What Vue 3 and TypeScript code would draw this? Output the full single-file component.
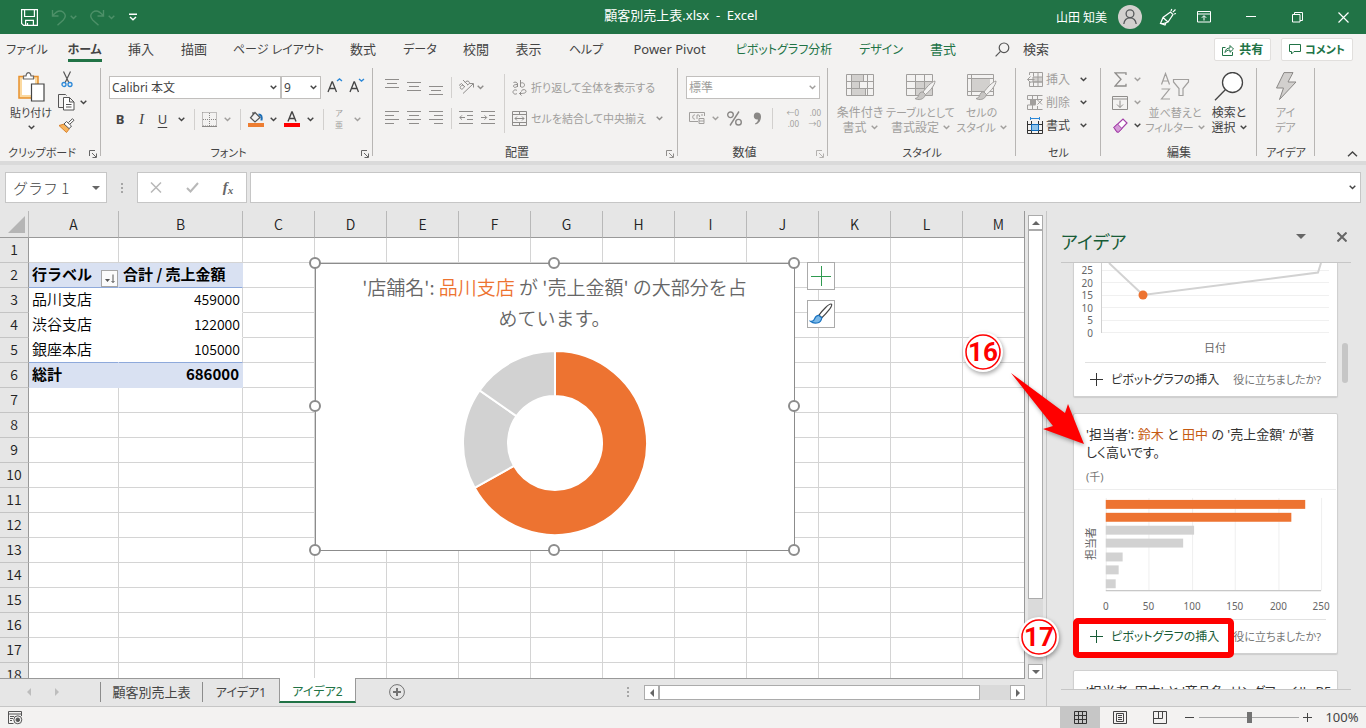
<script setup lang="ts">
import { computed, h, ref } from 'vue'

const Chev = () =>
  h('svg', { class: 'chev', width: 7, height: 5, viewBox: '0 0 7 5', fill: 'none', stroke: 'currentColor', 'stroke-width': 1.4 }, [
    h('path', { d: 'M.7.8l2.8 2.8L6.3.8' }),
  ])

const Launcher = () =>
  h('svg', { class: 'launcher', width: 8, height: 8, viewBox: '0 0 8 8', fill: 'none', stroke: 'currentColor' }, [
    h('path', { d: 'M.5 6V.5H6M3 3l4 4M7.5 3.500V7.500H3.500' }),
  ])

interface RibbonTab { label: string; kind?: string }
const tabs: RibbonTab[] = [
  { label: 'ファイル', kind: 'kana' },
  { label: 'ホーム', kind: 'active' },
  { label: '挿入' },
  { label: '描画' },
  { label: 'ページ レイアウト', kind: 'kana' },
  { label: '数式' },
  { label: 'データ', kind: 'kana' },
  { label: '校閲' },
  { label: '表示' },
  { label: 'ヘルプ', kind: 'kana' },
  { label: 'Power Pivot' },
  { label: 'ピボットグラフ分析', kind: 'context kana' },
  { label: 'デザイン', kind: 'context kana' },
  { label: '書式', kind: 'context' },
]

const restColumns = ['C', 'D', 'E', 'F', 'G', 'H', 'I', 'J', 'K', 'L', 'M']

interface PivotRow { a: string; b: string; kind: string }
const pivot: Record<number, PivotRow> = {
  2: { a: '行ラベル', b: '合計 / 売上金額', kind: 'p-head' },
  3: { a: '品川支店', b: '459000', kind: 'p-body' },
  4: { a: '渋谷支店', b: '122000', kind: 'p-body' },
  5: { a: '銀座本店', b: '105000', kind: 'p-last' },
  6: { a: '総計', b: '686000', kind: 'p-total' },
}

const donut = computed(() => {
  const values = [459, 122, 105]
  const total = values.reduce((s, v) => s + v, 0)
  const c = 93
  const R = 92
  const r = 47
  let angle = 0
  return values.map((v, i) => {
    const a0 = angle
    angle += (v / total) * Math.PI * 2
    const a1 = angle
    const pt = (rad: number, a: number) => `${(c + rad * Math.sin(a)).toFixed(2)} ${(c - rad * Math.cos(a)).toFixed(2)}`
    const large = a1 - a0 > Math.PI ? 1 : 0
    return {
      fill: i === 0 ? '#ed7331' : '#d2d2d2',
      d: `M${pt(R, a0)}A${R} ${R} 0 ${large} 1 ${pt(R, a1)}L${pt(r, a1)}A${r} ${r} 0 ${large} 0 ${pt(r, a0)}Z`,
    }
  })
})

const handles = ['tl', 'tc', 'tr', 'ml', 'mr', 'bl', 'bc', 'br']

const bars = [232, 215, 102, 90, 20, 15, 12]
const barTops = [10, 23, 36, 49, 63, 76, 90]
const barTicks = [0, 50, 100, 150, 200, 250]
const barX = (v: number) => 31 + Math.round((v * 217) / 250)
const lineTicks = [25, 20, 15, 10, 5, 0]

const fontName = ref('Calibri 本文')
const fontSize = ref('9')
const numberFormat = ref('標準')
const zoom = ref(50)
</script>

<template>
  <div class="app">
    <header class="titlebar">
      <div class="quick">
        <button aria-label="上書き保存">
          <svg width="17" height="17" viewBox="0 0 17 17" fill="none" stroke="#fff" stroke-width="1.2"><path d="M.6.6h15.8v15.8H2.600L.6 14.400zM3.600.6v6.900h9.800V.6M4.600 16.400v-5h7.800v5M6.500 16v-2" /></svg>
        </button>
        <button class="faded end" aria-label="元に戻す">
          <svg width="17" height="17" viewBox="0 0 17 17" fill="none" stroke="currentColor" stroke-width="1.4"><path d="M1.500 1v6h6M1.700 6.800C5 2.500 9 .800 12.300 3.200c3 2.300 2.200 5.600 0 7.800L6.500 16.300" /></svg>
        </button>
        <button class="faded" aria-label="元に戻す一覧"><Chev /></button>
        <button class="faded end" aria-label="やり直し">
          <svg width="17" height="17" viewBox="0 0 17 17" fill="none" stroke="currentColor" stroke-width="1.4"><path d="M15.500 1v6h-6M15.300 6.800C12 2.500 8 .800 4.700 3.200c-3 2.300-2.200 5.600 0 7.800l5.800 5.300" /></svg>
        </button>
        <button class="faded" aria-label="やり直し一覧"><Chev /></button>
        <button aria-label="クイック アクセス ツール バーのカスタマイズ">
          <svg width="8" height="8" viewBox="0 0 8 8" fill="none" stroke="#fff" stroke-width="1.400"><path d="M0 1.200h8M1 4l3 2.800L7 4" /></svg>
        </button>
      </div>
      <h1>顧客別売上表.xlsx&nbsp; -&nbsp; Excel</h1>
      <div class="window-tools">
        <span class="user">山田 知美</span>
        <svg class="avatar" width="24" height="24" viewBox="0 0 24 24"><circle cx="12" cy="12" r="12" fill="#d2d0ce" /><g fill="none" stroke="#55585a" stroke-width="1.300"><circle cx="12" cy="8.800" r="3.900" /><path d="M5.800 19c.5-4 3-6.200 6.200-6.200s5.700 2.200 6.200 6.200" /></g></svg>
        <button aria-label="近日公開の機能">
          <svg width="18" height="18" viewBox="0 0 18 18" fill="none" stroke="#fff" stroke-width="1.200"><path d="M1.500 15.500L4 9.500 11.500 4l2.500 2.500-5 7.500-4.500 1.500zM4 9.500l5 4.500M1.500 15.500l4.500 1.500 1-2M12 3l.8-2M13.800 4.200l2.700-2.700M15 6l2-.5" /></svg>
        </button>
        <button aria-label="リボンの表示オプション">
          <svg width="14" height="12" viewBox="0 0 14 12" fill="none" stroke="#fff"><path d="M.5.5h13v10.500H.5zM.5 3h13M7 9.500V5M4.800 6.800L7 4.600l2.200 2.200" /></svg>
        </button>
        <button aria-label="最小化"><svg width="10" height="2" viewBox="0 0 10 2"><path d="M0 .5h10" stroke="#fff" /></svg></button>
        <button aria-label="元のサイズに戻す">
          <svg width="11" height="11" viewBox="0 0 11 11" fill="none" stroke="#fff"><path d="M.5 2.500h7.500v7.500H.5zM2.500 2.500v-2h8v8H8" /></svg>
        </button>
        <button aria-label="閉じる"><svg width="11" height="11" viewBox="0 0 11 11" stroke="#fff" stroke-width="1.200"><path d="M.5.5l10 10M10.500.5l-10 10" /></svg></button>
      </div>
    </header>

    <nav class="tabrow">
      <div class="tabs">
        <button v-for="t in tabs" :key="t.label" class="tab" :class="t.kind">{{ t.label }}</button>
      </div>
      <button class="search">
        <svg width="15" height="15" viewBox="0 0 15 15" fill="none" stroke="#555" stroke-width="1.200"><circle cx="9" cy="5.800" r="4.800" /><path d="M5.500 9.300L.6 14.300" /></svg>
        <span>検索</span>
      </button>
      <div class="tab-actions">
        <button class="pill">
          <svg width="12" height="12" viewBox="0 0 12 12" fill="none" stroke="currentColor"><path d="M3.500 3.500h-3v8h10V8M3 8.500c.3-3 2-4.500 5-4.500V1.500L11.500 5 8 8.300V6C5.500 6 4 7 3 8.500z" /></svg>
          共有
        </button>
        <button class="pill narrow">
          <svg width="12" height="11" viewBox="0 0 12 11" fill="none" stroke="currentColor"><path d="M.5.5h11v7H5L2.500 10V7.500h-2z" /></svg>
          コメント
        </button>
      </div>
    </nav>

    <div class="ribbon">
      <section class="group g-clip">
        <div class="body">
          <button class="big">
            <svg width="30" height="32" viewBox="0 0 30 32" fill="none"><path d="M3 4.500h19V26H3z" fill="#fbd9a0" stroke="#e8912d" stroke-width="1.500" /><path d="M6 7h13v16H6z" fill="#fff" /><path d="M7.500 7V4H10C10.300 1.500 11 .6 12.500.6S14.700 1.500 15 4h2.500v3z" fill="#fff" stroke="#6b6b6b" stroke-width="1.200" /><path d="M15.500 12h12.500v17H15.500z" fill="#fff" stroke="#444" stroke-width="1.200" /></svg>
            <span class="kana">貼り付け</span>
            <span><Chev /></span>
          </button>
          <div class="stack">
            <button aria-label="切り取り"><svg width="12" height="17" viewBox="0 0 12 17" fill="none"><path d="M2.500.5l5.300 11M9.500.5L4.200 11.500" stroke="#555" stroke-width="1.200" /><circle cx="3" cy="13.500" r="2" stroke="#2b88d8" stroke-width="1.300" /><circle cx="9" cy="13.500" r="2" stroke="#2b88d8" stroke-width="1.300" /></svg></button>
            <div class="pair">
              <button aria-label="コピー"><svg width="17" height="17" viewBox="0 0 17 17" fill="#fff" stroke="#555"><path d="M5.500 13.500h-5V.5h7l1 1" fill="none" /><path d="M5.500 3.500h6l4.500 4.500v8H5.500zM11.500 3.500V8H16M8 10.500h5.500M8 13h5.500" /></svg></button>
              <button aria-label="コピーの一覧"><Chev /></button>
            </div>
            <button aria-label="書式のコピー"><svg width="17" height="15" viewBox="0 0 17 15"><path d="M1 7.500l5.500-1.500 5 4.500L8.500 14.500z" fill="#f8b45c" stroke="#d9822b" /><path d="M6 6l2.500-2.500 5 4.500-2.300 2.700zM10.500 4.500l4-3.800 1.500 1.600-4 3.700" fill="#fff" stroke="#555" /></svg></button>
          </div>
        </div>
        <footer><span class="kana">クリップボード</span><button aria-label="クリップボードの詳細"><Launcher /></button></footer>
      </section>

      <section class="group g-font">
        <div class="body rows">
          <div class="row">
            <label class="combo c-font"><select v-model="fontName" aria-label="フォント"><option>Calibri 本文</option></select><Chev /></label>
            <label class="combo c-size"><select v-model="fontSize" aria-label="フォント サイズ"><option>9</option></select><Chev /></label>
            <button class="grow-font" aria-label="フォント サイズの拡大"><svg width="16" height="16" viewBox="0 0 16 16" fill="none"><path d="M1 14L5 4h.5l4 10M2.400 10.500h5.800" stroke="#444" stroke-width="1.300" /><path d="M10 3l2.500-2L15 3" stroke="#2b88d8" stroke-width="1.400" /></svg></button>
            <button class="grow-font" aria-label="フォント サイズの縮小"><svg width="16" height="16" viewBox="0 0 16 16" fill="none"><path d="M1 14L5 4h.5l4 10M2.400 10.500h5.800" stroke="#444" stroke-width="1.300" /><path d="M10 1l2.500 2L15 1" stroke="#2b88d8" stroke-width="1.400" /></svg></button>
          </div>
          <div class="row fmt">
            <button class="b">B</button><button class="i">I</button><button class="u">U</button><button aria-label="下線の種類"><Chev /></button>
            <i class="bar"></i>
            <button class="off" aria-label="罫線"><svg width="15" height="15" viewBox="0 0 15 15" fill="none" stroke="#8a8886"><path d="M.5.5h14v13.500H.5zM7.500 1v13M1 7.500h13" stroke-dasharray="1 1" /><path d="M0 14.500h15" /></svg></button><button class="off" aria-label="罫線の種類"><Chev /></button>
            <i class="bar"></i>
            <button aria-label="塗りつぶしの色"><svg width="16" height="16" viewBox="0 0 16 16" fill="none"><path d="M7 1.500L12 6.500 7 11 2.500 6.800zM5 3.500V1" stroke="#555" stroke-width="1.200" /><path d="M10.500 3.500c3 0 3.500 2 3 6" stroke="#1f6fb5" stroke-width="2" /><path d="M0 12h16v4H0z" fill="#ed7d31" /></svg></button><button aria-label="塗りつぶしの色の一覧"><Chev /></button>
            <button aria-label="フォントの色"><svg width="16" height="16" viewBox="0 0 16 16" fill="none"><path d="M4 10.500L7.800 1h.4L12 10.500M5.300 7.500h5.400" stroke="#444" stroke-width="1.400" /><path d="M0 12h16v4H0z" fill="#f00" /></svg></button><button aria-label="フォントの色の一覧"><Chev /></button>
            <i class="bar"></i>
            <button class="off ruby" aria-label="ふりがな"><span>ア</span><span>亜</span></button><button class="off" aria-label="ふりがなの設定"><Chev /></button>
          </div>
        </div>
        <footer><span class="kana">フォント</span><button aria-label="フォントの詳細"><Launcher /></button></footer>
      </section>

      <section class="group g-align off">
        <div class="body">
          <div class="rows aligns">
            <div class="row al">
              <button aria-label="上揃え"><svg width="14" height="18" viewBox="0 0 14 18" stroke="currentColor"><path d="M0 1.500h14M2 5.500h10M0 9.500h14" /></svg></button>
              <button aria-label="上下中央揃え"><svg width="14" height="18" viewBox="0 0 14 18" stroke="currentColor"><path d="M0 4.500h14M2 8.500h10M0 12.500h14" /></svg></button>
              <button aria-label="下揃え"><svg width="14" height="18" viewBox="0 0 14 18" stroke="currentColor"><path d="M0 8.500h14M2 12.500h10M0 16.500h14" /></svg></button>
              <i class="bar"></i>
              <button aria-label="方向"><svg width="16" height="16" viewBox="0 0 16 16" fill="none" stroke="currentColor"><path d="M5 14.500L15 5M11.500 4.500h4V8.500M1 6.500L3.500 4.500 7 8M5 6C3 6.500 1.500 8 2.500 9.500S6 9.500 6 7.500M5 1l5 5M7 3.500c1-1.500 3-2 4-.8s.3 2.500-1.500 3.300" /></svg></button>
              <button class="start" aria-label="方向の一覧"><Chev /></button>
            </div>
            <div class="row al">
              <button aria-label="左揃え"><svg width="14" height="14" viewBox="0 0 14 14" stroke="currentColor"><path d="M0 .5h14M0 4.500h9M0 8.500h14M0 12.500h9" /></svg></button>
              <button aria-label="中央揃え"><svg width="14" height="14" viewBox="0 0 14 14" stroke="currentColor"><path d="M0 .5h14M2 4.500h10M0 8.500h14M2 12.500h10" /></svg></button>
              <button aria-label="右揃え"><svg width="14" height="14" viewBox="0 0 14 14" stroke="currentColor"><path d="M0 .5h14M5 4.500h9M0 8.500h14M5 12.500h9" /></svg></button>
              <i class="bar"></i>
              <button aria-label="インデントを減らす"><svg width="14" height="14" viewBox="0 0 14 14" fill="none" stroke="currentColor"><path d="M0 .5h14M8 4.500h6M8 8.500h6M0 12.500h14M6 6.500H.8M3 4.300L.8 6.500 3 8.700" /></svg></button>
              <button aria-label="インデントを増やす"><svg width="14" height="14" viewBox="0 0 14 14" fill="none" stroke="currentColor"><path d="M0 .5h14M8 4.500h6M8 8.500h6M0 12.500h14M0 6.500h5.500M3.500 4.300l2.200 2.200-2.200 2.200" /></svg></button>
            </div>
          </div>
          <div class="rows wraps">
            <button class="row wrap-btn"><svg width="15" height="17" viewBox="0 0 15 17" fill="none" stroke="currentColor"><path d="M1.500 3.500c2-1 4 0 4 1.500v3M5.500 5.500c-2.500 0-4.500.5-4 2s3.500.8 4-.5M8.500 1v7M8.500 4.500c1.500-1.500 4-.5 4 1.500s-2.500 3-4 1.500M5 11.500c-2-1.500-4 0-4 1.500s2 3 4 1.500M9.500 11.500c2-1.500 4.500-1 4.500.8s-2 2.200-6.500 2.200M9.500 12.500l-2 2 2 2" /></svg><span>折り返して全体を表示する</span></button>
            <button class="row wrap-btn"><svg width="15" height="15" viewBox="0 0 15 15" fill="none" stroke="currentColor"><path d="M.5.5h14v14H.5zM.5 3.500h14M.5 11.500h14M7.500.5v3M7.500 11.500v3M3 7.500h9M5 5.500l-2 2 2 2M10 5.500l2 2-2 2" /></svg><span>セルを結合して中央揃え</span><Chev /></button>
          </div>
        </div>
        <footer><span>配置</span><button aria-label="配置の詳細"><Launcher /></button></footer>
      </section>

      <section class="group g-num off">
        <div class="body rows">
          <div class="row"><label class="combo c-num"><select v-model="numberFormat" aria-label="表示形式"><option>標準</option></select><Chev /></label></div>
          <div class="row nums">
            <button aria-label="通貨表示形式"><svg width="17" height="14" viewBox="0 0 17 14" fill="none" stroke="currentColor"><path d="M9 10.500H.5v-9h15V5M6 4c-3-1-3 5 0 4M8 8V4c2-.5 3 .5 2.500 2M10 7.500h5v5h-5zM10 10h5M14 4h-2" /></svg></button>
            <button aria-label="通貨の一覧"><Chev /></button>
            <button aria-label="パーセント"><svg width="15" height="15" viewBox="0 0 15 15" fill="none" stroke="#8a8886" stroke-width="1.400"><circle cx="3.500" cy="3.800" r="2.800" /><circle cx="11.500" cy="11.200" r="2.800" /><path d="M12 .5L3 14.500" /></svg></button>
            <button aria-label="桁区切り"><svg width="9" height="13" viewBox="0 0 9 13"><path d="M4 .5C6.500.5 8 2 8 4.500 8 8.500 6 11.500 2.500 12.500l-.5-1c2-1 3-2.500 3-4C2.500 8 .8 6.500.8 4.300.8 2 2 .5 4 .5z" fill="#8a8886" /></svg></button>
            <i class="bar"></i>
            <button class="dec" aria-label="小数点以下の表示桁数を増やす"><span>←0</span><span>.00</span></button>
            <button class="dec" aria-label="小数点以下の表示桁数を減らす"><span>.00</span><span>→0</span></button>
          </div>
        </div>
        <footer><span>数値</span><button aria-label="表示形式の詳細"><Launcher /></button></footer>
      </section>

      <section class="group g-style off">
        <div class="body">
          <button class="big">
            <svg width="30" height="32" viewBox="0 0 30 32" fill="none" stroke="currentColor"><path d="M7 3h12v7H7zM7 10h8v7H7zM7 17h14v7H7z" fill="#d2d0ce" stroke="none" /><path d="M1.500 2.500h27v21h-27zM1.500 9.500h27M1.500 16.500h27M6.500 2.500v21M22.500 2.500v21M18.500 2.500v7M14.500 9.500v7M20.500 16.500v7" /></svg>
            <span>条件付き</span><span>書式 <Chev /></span>
          </button>
          <button class="big">
            <svg width="32" height="32" viewBox="0 0 32 32" fill="none" stroke="currentColor"><path d="M10 9h17v14H10z" fill="#d2d0ce" stroke="none" /><path d="M1.500 2.500h26v21h-26zM1.500 9.500h26M1.500 16.500h26M10.500 2.500v21M19.500 2.500v21" /><path d="M30 9c-4 1-9 7-12 11l2.500 2.500C25 19 30 13 30 9z" fill="#f3f2f1" /><path d="M18 20c-3-.5-4 2-4.500 4-.7 1.500-2 2.300-3.500 2.500 3 2 9 1.500 10.500-4z" fill="#c8c6c4" /></svg>
            <span class="kana">テーブルとして</span><span>書式設定 <Chev /></span>
          </button>
          <button class="big">
            <svg width="32" height="32" viewBox="0 0 32 32" fill="none" stroke="currentColor"><path d="M6 6h18v14H6z" fill="#d2d0ce" stroke="none" /><path d="M1.500 2.500h26v21h-26zM5.500 2.500v21M1.500 6.500h26M1.500 19.500h26" /><path d="M30 9c-4 1-9 7-12 11l2.500 2.500C25 19 30 13 30 9z" fill="#f3f2f1" /><path d="M18 20c-3-.5-4 2-4.500 4-.7 1.500-2 2.300-3.500 2.500 3 2 9 1.500 10.500-4z" fill="#c8c6c4" /></svg>
            <span class="kana">セルの</span><span class="kana">スタイル <Chev /></span>
          </button>
        </div>
        <footer><span class="kana">スタイル</span></footer>
      </section>

      <section class="group g-cell">
        <div class="body stack">
          <button class="cell-btn"><svg class="off" width="16" height="15" viewBox="0 0 16 15" fill="none" stroke="currentColor"><path d="M6 5h9.500v5H6z" fill="#d2d0ce" /><path d="M2.500 3V.5h13v14h-13V12M2.500 12.500V10h13M6.500.5v4M11 .5v14M6.500 10v4M.5 7.500h7M3.500 4.500l-3 3 3 3" /></svg><span class="off">挿入</span><Chev /></button>
          <button class="cell-btn"><svg class="off" width="16" height="15" viewBox="0 0 16 15" fill="none" stroke="currentColor"><path d="M3.500 5h5v4.500h-5z" fill="#a19f9d" /><path d="M.5.5h15M.5.5v4h15M.5 14.500h15M.5 10v4.500M.5 10h8M5.500.5v4M10.500.5v4M5.500 10v4.500M10.500 11v3.500M10.500 5l4.500 4.500M15 5l-4.500 4.500" /></svg><span class="off">削除</span><Chev /></button>
          <button class="cell-btn"><svg width="16" height="17" viewBox="0 0 16 17" fill="none"><path d="M.5 4v12.500h15V4M.5 7.500h15M.5 13.500h15M4.500 4v12.500M11.500 4v12.500" stroke="#333" /><path d="M4.500 7.500h7v6h-7z" fill="#8ec3eb" stroke="#0f6cbd" /><path d="M3.500 1.500h9M3.500 0v3M12.500 0v3" stroke="#2b88d8" /></svg><span>書式</span><Chev /></button>
        </div>
        <footer><span class="kana">セル</span></footer>
      </section>

      <section class="group g-edit">
        <div class="body">
          <div class="stack">
            <button class="icon-chev off" aria-label="合計"><svg width="13" height="15" viewBox="0 0 13 15" fill="none" stroke="#8f8d8b" stroke-width="1.300"><path d="M12 3V.8H1L7 7.300 1 14h11v-2.200" /></svg><Chev /></button>
            <button class="icon-chev off" aria-label="フィル"><svg width="16" height="14" viewBox="0 0 16 14" fill="none" stroke="#8f8d8b"><path d="M.5.500h15v13H.5zM.5 3h15M8 4.500v7M5 8.500l3 3 3-3" /></svg><Chev /></button>
            <button class="icon-chev" aria-label="クリア"><svg width="15" height="15" viewBox="0 0 15 15"><path d="M1 9.500L10 1l4 4-8.500 9H4z" fill="#fff" stroke="#a33fa8" stroke-width="1.200" /><path d="M1 9.500l3.500-3.500 4.500 4.700L5.500 14H4z" fill="#d59ad8" stroke="#a33fa8" /></svg><Chev /></button>
          </div>
          <button class="big off">
            <svg width="30" height="32" viewBox="0 0 30 32" fill="none" stroke="currentColor" stroke-width="1.200"><path d="M1.500 12.500l4-11 4 11M3 9h5M1.500 17h8l-8 10h8.500M13.500 7.500h15v2.500l-5.500 6.500v7h-4v-7L13.500 10z" /></svg>
            <span class="kana">並べ替えと</span><span class="kana">フィルター <Chev /></span>
          </button>
          <button class="big">
            <svg width="30" height="32" viewBox="0 0 30 32" fill="#fff" stroke="#444" stroke-width="1.300"><circle cx="18.500" cy="10.500" r="10" /><path d="M11.300 17.700L1 28.200" /></svg>
            <span>検索と</span><span>選択 <Chev /></span>
          </button>
        </div>
        <footer><span>編集</span></footer>
      </section>

      <section class="group g-idea">
        <div class="body">
          <button class="big off">
            <svg width="22" height="32" viewBox="0 0 22 32"><path d="M9 .6h9L13 10h8L4.500 27.500l4-11.500H1.500z" fill="#d2d0ce" stroke="#8a8886" /></svg>
            <span class="kana">アイ</span><span class="kana">デア</span>
          </button>
        </div>
        <footer><span class="kana">アイデア</span></footer>
      </section>
      <button class="collapse" aria-label="リボンを折りたたむ"><svg width="11" height="6" viewBox="0 0 11 6" fill="none" stroke="#444" stroke-width="1.400"><path d="M1 5.200l4.500-4.200L10 5.200" /></svg></button>
    </div>

    <div class="formula">
      <div class="namebox"><input value="グラフ 1" aria-label="名前ボックス" /><i class="tri down"></i></div>
      <span class="dots"></span>
      <div class="fx">
        <button aria-label="キャンセル"><svg width="12" height="11" viewBox="0 0 12 11" stroke="#b8b8b8" stroke-width="1.500"><path d="M1 .5l10 10M11 .5L1 10.500" /></svg></button>
        <button aria-label="入力"><svg width="13" height="11" viewBox="0 0 13 11" fill="none" stroke="#b8b8b8" stroke-width="2"><path d="M1 6l3.500 3.500L12 1" /></svg></button>
        <button class="fxb">f<small>x</small></button>
      </div>
      <div class="fbar"><input aria-label="数式バー" /><Chev /></div>
    </div>

    <main class="main">
      <div class="book">
        <div class="sheet-wrap">
          <div class="sheet">
            <table>
              <colgroup><col class="w-n" /><col class="w-a" /><col class="w-b" /><col v-for="c in restColumns" :key="c" class="w-c" /></colgroup>
              <thead>
                <tr>
                  <th class="corner"><svg width="17" height="17" viewBox="0 0 17 17"><path d="M17 0v17H0z" fill="#b5b5b5" /></svg></th>
                  <th>A</th><th>B</th>
                  <th v-for="c in restColumns" :key="c">{{ c }}</th>
                </tr>
              </thead>
              <tbody>
                <tr v-for="n in 18" :key="n" :class="pivot[n]?.kind">
                  <th>{{ n }}</th>
                  <td class="pa">
                    <div v-if="n === 2" class="filter-cell">{{ pivot[n].a }}<button aria-label="並べ替え"><svg width="12" height="12" viewBox="0 0 12 12"><path d="M1 6h5L3.500 9z" fill="#555" /><path d="M9 1.500v8M7.500 8L9 9.500 10.500 8" fill="none" stroke="#555" /></svg></button></div>
                    <template v-else-if="pivot[n]">{{ pivot[n].a }}</template>
                  </td>
                  <td class="pb">{{ pivot[n]?.b }}</td>
                  <td v-for="c in restColumns" :key="c"></td>
                </tr>
              </tbody>
            </table>

            <div class="chart">
              <p>'店舗名': <b>品川支店</b> が '売上金額' の大部分を占<br />めています。</p>
              <svg width="186" height="186" viewBox="0 0 186 186"><path v-for="s in donut" :key="s.d" :d="s.d" :fill="s.fill" stroke="#fff" stroke-width="2" /></svg>
              <i v-for="k in handles" :key="k" class="handle" :class="k"></i>
              <div class="chart-tools">
                <button aria-label="グラフ要素"><svg width="20" height="20" viewBox="0 0 20 20"><path d="M10.500 0v20M0 10.500h20" stroke="#2f9a50" /></svg></button>
                <button aria-label="グラフ スタイル"><svg width="24" height="22" viewBox="0 0 24 22"><path d="M22.500 1.200c-2-1.500-9.500 6.500-12.500 11l2.800 2.500C17 11 24 3 22.500 1.200z" fill="#fff" stroke="#444" stroke-width="1.200" /><path d="M10 12.500c-4-.5-4 3.500-5.500 5-1 .8-2 1-3 .8 3 2.700 10.500 3 11.300-3.600z" fill="#7ab8e8" stroke="#1a73c0" stroke-width="1.200" /></svg></button>
              </div>
            </div>
          </div>
          <div class="vscroll"><button aria-label="上へ"><i class="tri up"></i></button><div class="thumb"></div><div class="rest"></div><button aria-label="下へ"><i class="tri down"></i></button></div>
        </div>

        <div class="sheetbar">
          <div class="nav-arrows"><button aria-label="前のシート"><i class="tri left pale"></i></button><button aria-label="次のシート"><i class="tri right pale"></i></button></div>
          <button class="stab s1">顧客別売上表</button>
          <button class="stab s2">アイデア1</button>
          <button class="stab active">アイデア2</button>
          <button class="add" aria-label="新しいシート"><svg width="16" height="16" viewBox="0 0 16 16" fill="none" stroke="#737373"><circle cx="8" cy="8" r="7.400" /><path d="M8 4v8M4 8h8" stroke-width="2" /></svg></button>
          <span class="dots"></span>
          <div class="hscroll"><button aria-label="左へ"><i class="tri left"></i></button><div class="thumb"></div><div class="rest"></div><button aria-label="右へ"><i class="tri right"></i></button></div>
        </div>
      </div>

      <aside class="pane">
        <header>
          <h2>アイデア</h2>
          <button aria-label="作業ウィンドウのオプション"><i class="tri down big-tri"></i></button>
          <button aria-label="作業ウィンドウを閉じる"><svg width="10" height="10" viewBox="0 0 10 10" stroke="#666" stroke-width="2"><path d="M.5.5l9 9M9.500.5l-9 9" /></svg></button>
        </header>
        <div class="feed">
          <article class="card first">
            <svg class="plot" width="262" height="99" viewBox="0 0 262 99">
              <path d="M27 7.500h228M27 19.500h228M27 32.500h228M27 44.500h228M27 57.500h228M27 69.500h228" stroke="#f0f0f0" />
              <path d="M27.500 0v70" stroke="#d0d0d0" />
              <path d="M35 0l34 32 175-22.500 3-9.500" fill="none" stroke="#d2d2d2" stroke-width="2" />
              <circle cx="69" cy="32" r="4.500" fill="#ed7331" />
              <text v-for="(t, i) in lineTicks" :key="t" x="19" :y="11 + i * 12.500" text-anchor="end">{{ t }}</text>
              <text class="axis" x="141" y="89" text-anchor="middle">日付</text>
            </svg>
            <footer><button class="insert"><svg width="13" height="13" viewBox="0 0 13 13"><path d="M6.500 0v13M0 6.500h13" stroke="currentColor" /></svg>ピボットグラフの挿入</button><a href="#">役に立ちましたか?</a></footer>
          </article>
          <article class="card">
            <p>'担当者': <b>鈴木</b> と <b>田中</b> の '売上金額' が著<br />しく高いです。</p>
            <small>(千)</small>
            <svg class="plot ruled" width="262" height="130" viewBox="0 0 262 130">
              <path v-for="t in barTicks" :key="t" :d="`M${barX(t)}.5 8v93`" stroke="#efefef" />
              <rect v-for="(v, i) in bars" :key="v" x="31" :y="barTops[i]" :width="barX(v) - 31" height="9" :fill="i < 2 ? '#ed7331' : '#d2d2d2'" />
              <path d="M31 101.500h217" stroke="#b8b8b8" />
              <text v-for="t in barTicks" :key="t" :x="barX(t)" y="121" text-anchor="middle">{{ t }}</text>
              <text class="axis" text-anchor="middle" transform="translate(20 54) rotate(-90)">担当者</text>
            </svg>
            <footer><button class="insert green"><svg width="13" height="13" viewBox="0 0 13 13"><path d="M6.500 0v13M0 6.500h13" stroke="currentColor" /></svg>ピボットグラフの挿入</button><a href="#">役に立ちましたか?</a></footer>
          </article>
          <article class="card last"><p>'担当者: 田中' と '商品名: リングファイル_B5</p></article>
        </div>
        <div class="feed-thumb"></div>

        <svg class="notes" width="300" height="340" viewBox="0 0 300 340">
          <g fill="#fff" class="lift"><circle cx="26" cy="28" r="20" /><circle cx="82" cy="313" r="20" /></g>
          <path class="lift" d="M54 49L108 89l3-9 16 40-41-15 10-3z" fill="#f00" />
          <g fill="none" stroke="#f00"><circle cx="26" cy="28" r="17" stroke-width="1.500" /><circle cx="82" cy="313" r="17" stroke-width="1.500" /><rect x="119" y="297" width="155" height="34" rx="2" stroke-width="6" /></g>
          <g class="num" fill="#f00" text-anchor="middle"><text x="26" y="37">16</text><text x="82" y="322">17</text></g>
        </svg>
      </aside>
    </main>

    <footer class="status">
      <button class="macro" aria-label="マクロの記録"><svg width="15" height="14" viewBox="0 0 15 14" fill="none" stroke="#555"><path d="M5.500 12.500h-5V.5h13V5M.5 3h13M2 5.500h4M2 7.500h3M2 9.500h2" /><circle cx="9.800" cy="8.800" r="4" /><circle cx="9.800" cy="8.800" r="1.800" fill="#555" /></svg></button>
      <div class="views">
        <button class="on" aria-label="標準"><svg width="13" height="13" viewBox="0 0 13 13" fill="none" stroke="#333"><path d="M.5.5h12v12H.5zM4.500.5v12M8.500.5v12M.5 4.500h12M.5 8.500h12" /></svg></button>
        <button aria-label="ページ レイアウト"><svg width="14" height="13" viewBox="0 0 14 13" fill="none" stroke="#444"><path d="M.5.5h13v12H.5zM3.500 2.500h7v8h-7zM5 4.500h4M5 6.500h4M5 8.500h4" /></svg></button>
        <button aria-label="改ページ プレビュー"><svg width="14" height="13" viewBox="0 0 14 13" fill="none" stroke="#444"><path d="M.5.5h13v12H.5zM5.500.5v7M9.500.5v7M.5 7.500h9" /></svg></button>
      </div>
      <button class="zb" aria-label="縮小"><svg width="9" height="9" viewBox="0 0 9 9" stroke="#444"><path d="M0 4.500h9" /></svg></button>
      <input v-model="zoom" type="range" min="0" max="100" aria-label="ズーム" />
      <button class="zb" aria-label="拡大"><svg width="9" height="9" viewBox="0 0 9 9" stroke="#444"><path d="M0 4.500h9M4.500 0v9" /></svg></button>
      <button class="pct">100%</button>
    </footer>
  </div>
</template>

<style>
body { margin: 0; }
</style>

<style scoped>
* { box-sizing: border-box; }
.app {
  display: flex; flex-direction: column; height: 100vh; overflow: hidden;
  font: 12px/15px "Noto Sans", "Noto Sans CJK JP", sans-serif;
  font-feature-settings: "palt"; color: #444; background: #e6e6e6;
}
button { display: inline-flex; align-items: center; justify-content: center; padding: 0; border: 0; background: none; font: inherit; font-feature-settings: inherit; color: inherit; white-space: nowrap; }
button, a { cursor: pointer; }
svg { display: block; flex: none; }
.off { color: #a19f9d; }

.titlebar { display: grid; grid-template-columns: 1fr auto 1fr; align-items: center; flex: none; height: 34px; background: #217346; color: #fff; }
.titlebar h1 { margin: 0; padding: 0 4px 3px 0; font-size: 13px; font-weight: 400; }
.quick { display: grid; grid-template-columns: 26px 26px 10px 27px 12px 32px; padding-left: 16px; }
.faded { color: #4d9068; }
.faded.end { justify-content: flex-end; }
.window-tools { display: flex; align-items: center; justify-content: flex-end; }
.user { margin-right: 11px; }
.avatar { margin-right: 7px; }
.window-tools button { width: 38px; height: 30px; }
.window-tools button:nth-of-type(n + 3) { width: 46px; }
.window-tools button:nth-of-type(2) { width: 34px; margin-right: 7px; }

.tabrow { display: flex; align-items: flex-start; flex: none; height: 34px; background: #f3f2f1; }
.tabs { display: grid; grid-template-columns: 54px 61px 52px 54px 115px 54px 60px 52px 53px 62px 105px 124px 70px 54px; }
.tab { position: relative; height: 30px; font-size: 13px; }
.tab.kana { font-size: 12px; }
.tab.active { font-size: 12px; font-weight: 700; }
.tab.active::after { content: ""; position: absolute; right: 13px; bottom: 2px; left: 14px; height: 3px; background: #217346; }
.tab.context { color: #217346; }
.search { gap: 13px; height: 30px; margin-left: 25px; font-size: 13px; }
.tab-actions { display: flex; gap: 10px; margin: 4px 13px 0 auto; }
.pill { gap: 5px; height: 23px; padding: 0 7px; border: 1px solid #e1dfdd; border-radius: 2px; background: #fff; color: #217346; font-weight: 700; }
.pill.narrow { gap: 4px; font-size: 11px; }

.ribbon { display: flex; flex: none; height: 97px; border-bottom: 4px solid #dadada; background: #f3f2f1; }
.group { position: relative; display: flex; flex-direction: column; flex: none; }
.group::after { content: ""; position: absolute; top: 0; right: 0; width: 1px; height: 88px; background: #b8b6b4; }
.body { display: flex; flex: 1; min-height: 0; }
.group > footer { display: flex; height: 17px; color: #444; }
.group > footer span { flex: 1; text-align: center; white-space: nowrap; line-height: 17px; }
.group > footer button { width: 17px; padding-top: 2px; color: #666; }
.off > footer button { color: #b3b1af; }
.kana { font-size: 11px; }
.g-clip { width: 101px; }
.g-font { width: 272px; }
.g-align { width: 305px; }
.g-num { width: 150px; }
.g-style { width: 188px; }
.g-cell { width: 85px; }
.g-edit { width: 156px; }
.g-idea { width: 58px; }
.big { display: flex; flex-direction: column; align-items: center; justify-content: flex-start; align-self: flex-start; height: 70px; padding-top: 4px; }
.big > svg { margin-bottom: 1px; }
.big span { display: flex; align-items: center; gap: 4px; height: 15px; }
.g-clip .big { width: 54px; margin-left: 4px; }
.g-style .body { padding-left: 2px; }
.g-style .big { width: 61px; }
.g-style .big:first-child { width: 60px; }
.g-idea .big { width: 57px; }
.stack { display: grid; grid-template-rows: repeat(3, 23px); align-content: start; justify-items: start; }
.g-clip .stack > button { width: 17px; height: 23px; }
.pair { display: flex; align-items: center; gap: 5px; height: 23px; }
.g-cell .stack { padding-left: 11px; }
.cell-btn { display: grid; grid-template-columns: 16px 31px 14px; gap: 3px; justify-items: start; height: 23px; }
.icon-chev { display: grid; grid-template-columns: 16px 8px; gap: 5px; height: 23px; justify-items: center; }
.g-edit .body { padding-left: 11px; }
.g-edit .body .big { width: 58px; margin-left: 5px; }
.g-edit .body .big + .big { width: 50px; margin-left: 0; }

.rows { display: flex; flex-direction: column; gap: 9px; padding-top: 8px; }
.row { display: flex; height: 22px; align-items: center; }
.g-font .rows, .g-num .rows { padding-left: 8px; }
.combo { position: relative; display: flex; align-items: center; height: 23px; border: 1px solid #c1bfbd; background: #fff; }
.combo select { flex: 1; width: 100%; height: 21px; padding: 0 16px 0 2px; border: 0; background: none; font: inherit; color: inherit; appearance: none; }
.combo .chev { position: absolute; right: 3px; }
.c-font { width: 172px; }
.c-size { width: 40px; margin-right: 3px; }
.c-num { width: 134px; }
.grow-font { width: 22px; padding-bottom: 2px; }
.bar { width: 1px; height: 21px; justify-self: center; background: #d2d0ce; }
.fmt { display: grid; grid-template-columns: 22px 21px 21px 16px 10px 20px 17px 9px 22px 13px 23px 15px 10px 22px 14px; }
.b, .i, .u { font-size: 13px; }
.b { font-weight: 700; }
.i { font-family: "Liberation Serif", serif; font-size: 15px; font-style: italic; }
.u { text-decoration: underline; text-underline-offset: 3px; }
.ruby { flex-direction: column; font-size: 8px; line-height: 12px; }
.aligns { width: 131px; padding-left: 8px; }
.al { display: grid; grid-template-columns: 22px 22px 22px 8px 22px 22px; }
.al .start { justify-content: flex-start; }
.g-align svg { color: #8f8d8b; }
.wraps { position: relative; flex: 1; padding-left: 8px; font-size: 11px; }
.wraps::before { content: ""; position: absolute; top: 6px; left: 0; width: 1px; height: 59px; background: #d2d0ce; }
.wrap-btn { justify-content: flex-start; gap: 4px; }
.wrap-btn .chev { margin-left: 6px; }
.nums { display: grid; grid-template-columns: 23px 12px 26px 20px 10px 22px 22px; }
.dec { flex-direction: column; align-items: flex-end; font-size: 8px; line-height: 11px; }
.collapse { align-self: flex-end; width: 20px; height: 14px; margin-left: auto; margin-right: 4px; }

.formula { display: flex; flex: none; height: 46px; padding: 7px 5px 8px; }
.formula > div { border: 1px solid #c6c6c6; background: #fff; }
.formula input { flex: 1; min-width: 0; padding: 0; border: 0; outline: 0; background: none; font: 300 15px "Noto Sans CJK JP", sans-serif; color: #444; }
.namebox { display: flex; align-items: center; width: 102px; padding: 0 6px 0 7px; }
.dots { display: block; width: 2px; height: 10px; background: repeating-linear-gradient(#a6a6a6 0 2px, transparent 2px 4px); }
.formula .dots { align-self: center; margin: 0 14px; }
.fx { display: grid; grid-template-columns: repeat(3, 36px); width: 110px; margin-right: 3px; }
.fxb { font: italic 700 15px "Liberation Serif", serif; color: #666; }
.fxb small { font-size: 11px; padding-top: 4px; }
.fbar { display: flex; align-items: center; flex: 1; padding: 0 4px 0 8px; }

.tri { display: block; width: 0; height: 0; border: 4px solid transparent; }
.tri.down { border-top-color: #666; border-bottom-width: 0; }
.tri.up { border-bottom-color: #666; border-top-width: 0; }
.tri.left { border-right-color: #666; border-left-width: 0; }
.tri.right { border-left-color: #666; border-right-width: 0; }
.tri.left.pale { border-right-color: #bdbdbd; }
.tri.right.pale { border-left-color: #bdbdbd; }
.tri.big-tri { border-width: 5px 5px 0; }

.main { display: flex; flex: 1; min-height: 0; }
.book { display: flex; flex-direction: column; flex: 1; min-width: 0; }
.sheet-wrap { display: flex; flex: 1; min-height: 0; padding-right: 2px; }
.sheet { position: relative; flex: 1; overflow: hidden; border-right: 1px solid #999; border-bottom: 1px solid #999; background: #fff; }
table { width: 1035px; table-layout: fixed; border-spacing: 0; color: #000; font: 350 15px/20px "Noto Sans CJK JP", sans-serif; font-feature-settings: normal; }
.w-n { width: 29px; }
.w-a { width: 90px; }
.w-b { width: 124px; }
.w-c { width: 72px; }
th, td { height: 25px; padding: 0 0 2px; border: 0 solid #d4d4d4; border-width: 0 1px 1px 0; white-space: nowrap; }
th { background: #e6e6e6; font-size: 14px; font-weight: 350; color: #222; }
thead th { height: 27px; padding: 0; border-right-color: #b8b8b8; border-bottom-color: #999; }
tbody th { border-right-color: #999; border-bottom-color: #c4c4c4; }
.corner svg { margin-left: 8px; }
td.pa { padding-left: 3px; }
td.pb { padding-right: 2px; text-align: right; font-size: 14px; }
.p-head td.pa, .p-head td.pb, .p-total td.pa, .p-total td.pb { background: #d9e1f2; border-color: #d9e1f2; font-size: 15px; font-weight: 700; }
.p-head td.pa, .p-head td.pb { padding-bottom: 0; border-bottom-color: #8ea9db; }
.p-head td.pb { padding-bottom: 2px; padding-left: 4px; text-align: left; }
.p-total td.pb { padding-right: 3px; }
.p-body td.pa, .p-body td.pb { border-bottom-color: #fff; }
.p-body td.pa, .p-last td.pa { border-right-color: #fff; }
.p-last td.pa, .p-last td.pb { border-bottom-color: #8ea9db; }
.filter-cell { display: flex; justify-content: space-between; height: 24px; line-height: 22px; }
.filter-cell button { align-self: flex-end; width: 17px; height: 17px; border: 1px solid #a6a6a6; background: #fbfbfb; }

.chart { position: absolute; top: 52px; left: 315px; display: flex; flex-direction: column; align-items: center; width: 480px; height: 288px; padding-right: 1px; border: 1px solid #8c8c8c; background: #fff; }
.chart p { margin: 7px 0 17px; text-align: center; font: 350 19px/31px "Noto Sans CJK JP", sans-serif; font-feature-settings: normal; color: #666; white-space: nowrap; }
.chart b { font-weight: 350; color: #ed7331; }
.handle { position: absolute; width: 12px; height: 12px; border: 2px solid #8c8c8c; border-radius: 50%; background: #fff; }
.tl, .tc, .tr { top: -7px; }
.ml, .mr { top: calc(50% - 7px); }
.bl, .bc, .br { bottom: -6px; }
.tl, .ml, .bl { left: -7px; }
.tc, .bc { left: calc(50% - 7px); }
.tr, .mr, .br { right: -6px; }
.chart-tools { position: absolute; top: -2px; left: 491px; display: grid; gap: 10px; }
.chart-tools button { width: 28px; height: 28px; border: 1px solid #ababab; background: #fff; }

.vscroll { display: flex; flex-direction: column; width: 16px; margin: 4px 0 0 3px; }
.vscroll button, .hscroll button { flex: none; width: 15px; height: 15px; border: 1px solid #ababab; background: #fff; }
.vscroll .thumb, .hscroll .thumb { border: 1px solid #ababab; background: #fff; }
.vscroll .thumb { flex: 369; width: 15px; }
.vscroll .rest { flex: 65; width: 15px; background: #dadada; }
.sheetbar { display: flex; align-items: flex-start; flex: none; height: 27px; padding-right: 21px; }
.nav-arrows { display: grid; grid-template-columns: 28px 28px; width: 100px; height: 26px; padding-left: 15px; }
.stab { position: relative; height: 20px; margin-top: 3px; font-size: 12px; }
.s1 { width: 103px; border-left: 1px solid #8c8c8c; border-right: 1px solid #8c8c8c; font-size: 13px; }
.s2 { width: 76px; }
.stab.active { z-index: 1; width: 77px; height: 25px; margin-top: -1px; padding-top: 4px; border: 1px solid #999; border-width: 0 1px 2px; border-bottom-color: #217346; background: #fff; color: #217346; }
.add { height: 26px; margin-left: 33px; }
.sheetbar .dots { margin: 8px 15px 0 auto; }
.hscroll { display: flex; width: 381px; margin-top: 6px; }
.hscroll .thumb { flex: 321; height: 15px; }
.hscroll .rest { flex: 30; height: 15px; background: #dadada; }

.pane { position: relative; display: flex; flex-direction: column; flex: none; width: 320px; padding: 0 15px 16px 14px; border-left: 1px solid #c6c6c6; }
.pane > header { display: flex; align-items: center; flex: none; height: 52px; padding: 0 3px 0 0; border-bottom: 1px solid #c6c6c6; }
.pane h2 { flex: 1; margin: 8px 0 0; font: 400 18px/28px "Noto Sans CJK JP", sans-serif; font-feature-settings: "palt"; color: #185c37; }
.pane > header button { width: 12px; margin-left: 29px; }
.feed { flex: 1; min-height: 0; overflow: hidden; padding: 0 13px 0 12px; border-bottom: 1px solid #c6c6c6; }
.card { margin-bottom: 16px; border: 1px solid #d0d0d0; border-radius: 2px; background: #fff; box-shadow: 0 1px 1px #ccc; }
.card.first { border-top: 0; border-radius: 0 0 2px 2px; }
.card p { margin: 0; padding: 11px 0 0 12px; font-size: 13px; line-height: 18px; color: #333; white-space: nowrap; }
.card b { font-weight: 400; color: #c55a11; }
.card small { display: block; padding: 8px 12px 5px; font-size: 11px; color: #767676; }
.plot text { font-size: 10px; fill: #666; }
.plot text.axis { font-size: 11px; }
.ruled { border-top: 1px solid #ededed; }
.card footer { display: flex; align-items: center; height: 34px; margin: 0 11px; border-top: 1px solid #e1e1e1; }
.insert { gap: 8px; margin-left: 5px; color: #333; }
.insert.green { color: #185c37; }
.card a { margin-left: auto; padding-right: 5px; color: #767676; text-decoration: none; white-space: nowrap; font-size: 11px; }
.last { height: 60px; }
.feed-thumb { position: absolute; top: 132px; right: 18px; width: 6px; height: 40px; border-radius: 3px; background: #c6c6c6; }
.notes { position: absolute; top: 113px; left: -90px; overflow: visible; pointer-events: none; z-index: 3; }
.lift { filter: drop-shadow(1px 2px 2px rgba(0, 0, 0, .35)); }
.num text { font: 700 26px "Liberation Sans Narrow", Roboto, sans-serif; }

.status { display: flex; align-items: center; flex: none; height: 22px; border-top: 1px solid #c6c6c6; background: #f3f2f1; }
.macro { margin-left: 8px; margin-right: auto; }
.views { display: flex; align-self: stretch; margin-right: 5px; }
.views button { width: 40px; }
.views .on { background: #c6c6c6; }
.zb { width: 9px; height: 20px; }
.status input { width: 100px; height: 12px; margin: 0 4px 0 5px; appearance: none; background: linear-gradient(#a6a6a6, #a6a6a6) center / 100% 1px no-repeat; }
.status input::-webkit-slider-thumb { appearance: none; width: 5px; height: 11px; background: #737373; }
.pct { width: 36px; margin: 0 6px 0 12px; font-size: 13px; }
</style>
